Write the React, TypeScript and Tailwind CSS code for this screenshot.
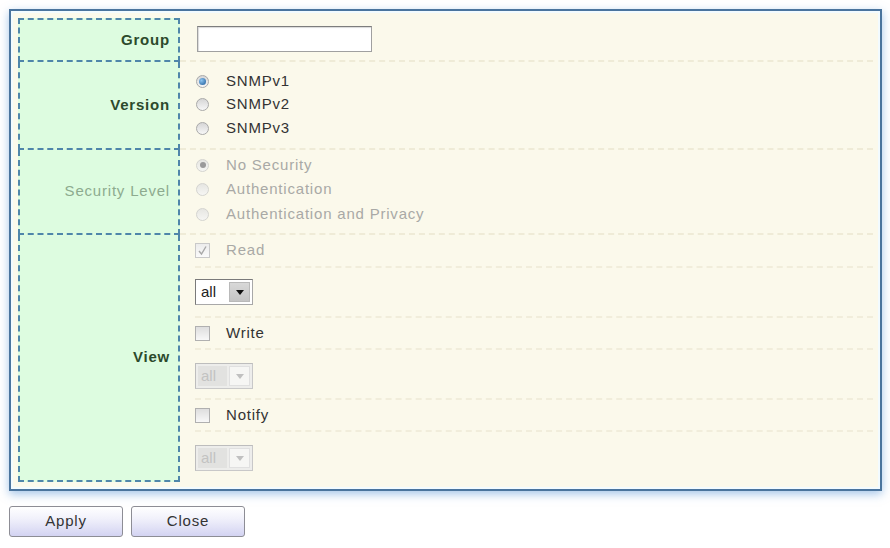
import React from "react";

const font = { fontFamily: '"Liberation Sans", Arial, sans-serif' };

function Radio({ checked, disabled }: { checked?: boolean; disabled?: boolean }) {
  return (
    <span
      className={
        "w-[13px] h-[13px] rounded-full border flex items-center justify-center shrink-0 " +
        (disabled
          ? "border-[#d4d4d0] bg-[linear-gradient(#e6e6e2,#f6f6f3)]"
          : "border-[#a9a9a9] bg-[linear-gradient(#d6d6d6,#f7f7f7)]")
      }
    >
      {checked && !disabled && (
        <span className="w-[7px] h-[7px] rounded-full bg-[radial-gradient(circle_at_35%_35%,#8cc4f0,#1d5a98)]" />
      )}
      {checked && disabled && (
        <span className="w-[6px] h-[6px] rounded-full bg-[#9a9a9a]" />
      )}
    </span>
  );
}

function Check({ checked, disabled }: { checked?: boolean; disabled?: boolean }) {
  return (
    <span
      className={
        "w-[15px] h-[15px] border flex items-center justify-center shrink-0 " +
        (disabled
          ? "border-[#c9c9c9] bg-[linear-gradient(#ececec,#fafafa)]"
          : "border-[#b0b0b0] bg-[linear-gradient(#dedede,#f8f8f8)]")
      }
    >
      {checked && (
        <svg width="11" height="11" viewBox="0 0 11 11">
          <path d="M2 6 L4.5 9 L9 1.5" stroke="#a8a8a8" strokeWidth="1.4" fill="none" />
        </svg>
      )}
    </span>
  );
}

function Select({ disabled }: { disabled?: boolean }) {
  return (
    <div
      className={
        "w-[58px] h-[26px] border flex items-stretch p-[2px] gap-[2px] " +
        (disabled
          ? "border-[#c8c8c8] border-t-[#bdbdbd] border-l-[#bdbdbd] bg-[#ededeb]"
          : "border-[#a8a8a8] border-t-[#7a7a7a] border-l-[#7a7a7a] bg-white")
      }
    >
      <div
        className={
          "flex-1 flex items-center pl-[3px] text-[15px] tracking-normal " +
          (disabled ? "text-[#c2c2c2] bg-[#e2e2e0]" : "text-[#222] bg-white")
        }
      >
        all
      </div>
      <div
        className={
          "w-[21px] flex items-center justify-center border " +
          (disabled
            ? "bg-[#f6f6f4] border-[#e0e0e0]"
            : "bg-[linear-gradient(#d8d8d8,#c4c4c4)] border-[#b9b9b9]")
        }
      >
        <svg width="8" height="5" viewBox="0 0 8 5">
          <path d="M0 0 H8 L4 5 Z" fill={disabled ? "#c0c0c0" : "#111"} />
        </svg>
      </div>
    </div>
  );
}

const labelBase =
  "w-[162px] shrink-0 bg-[#ddfce0] border-l-2 border-r-2 border-b-2 border-dashed border-[#4f86aa] flex items-center justify-end pr-[8px] text-[15px]";
const valueBase = "flex-1 border-b-2 border-dashed border-[#efebd7] pl-[16px]";
const faint = "border-b-2 border-dashed border-[#f1eddb]";

export default function App() {
  return (
    <div className="w-[890px] h-[548px] bg-white relative overflow-hidden tracking-[0.8px]" style={font}>
      <div className="ml-[9px] mt-[9px] w-[873px] border-2 border-[#4a749d] bg-[#fbf9eb] p-[7px] shadow-[0_3px_9px_rgba(90,150,215,0.55),inset_0_0_0_2px_#f2fbff]">
        {/* Group */}
        <div className="flex h-[44px]">
          <div className={labelBase + " border-t-2 font-bold text-[#2c4a2c]"}>Group</div>
          <div className={valueBase + " flex items-center"}>
            <div className="ml-px w-[175px] h-[26px] bg-white border border-[#a0a0a0] border-t-[#7d7d7d] shadow-[inset_1px_1px_1px_rgba(0,0,0,0.15)]" />
          </div>
        </div>
        {/* Version */}
        <div className="flex h-[88px]">
          <div className={labelBase + " font-bold text-[#2c4a2c]"}>Version</div>
          <div className={valueBase + " flex flex-col justify-center pb-[1px] text-[15px] text-[#333]"}>
            {["SNMPv1", "SNMPv2", "SNMPv3"].map((t, i) => (
              <div key={t} className="h-[23.5px] flex items-center">
                <Radio checked={i === 0} />
                <span className="ml-[17px]">{t}</span>
              </div>
            ))}
          </div>
        </div>
        {/* Security Level */}
        <div className="flex h-[85px]">
          <div className={labelBase + " text-[#8dab8f]"}>Security Level</div>
          <div className={valueBase + " flex flex-col justify-center pb-[4px] text-[15px] text-[#a9a9a6]"}>
            {["No Security", "Authentication", "Authentication and Privacy"].map((t, i) => (
              <div key={t} className="h-[24.5px] flex items-center">
                <Radio checked={i === 0} disabled />
                <span className="ml-[17px]">{t}</span>
              </div>
            ))}
          </div>
        </div>
        {/* View */}
        <div className="flex h-[247px]">
          <div className={labelBase + " font-bold text-[#2c4a2c]"}>View</div>
          <div className="flex-1 flex flex-col pl-[15px] text-[15px]">
            <div className={"h-[33px] flex items-center text-[#a9a9a6] " + faint}>
              <Check checked disabled />
              <span className="ml-[16px]">Read</span>
            </div>
            <div className={"h-[50px] pt-[11px] " + faint}>
              <Select />
            </div>
            <div className={"h-[32px] flex items-center text-[#333] " + faint}>
              <Check />
              <span className="ml-[16px]">Write</span>
            </div>
            <div className={"h-[50px] pt-[13px] " + faint}>
              <Select disabled />
            </div>
            <div className={"h-[32px] flex items-center text-[#333] " + faint}>
              <Check />
              <span className="ml-[16px]">Notify</span>
            </div>
            <div className="flex-1 pt-[13px]">
              <Select disabled />
            </div>
          </div>
        </div>
      </div>
      <div className="ml-[9px] mt-[15px] flex gap-[8px]">
        {["Apply", "Close"].map((t) => (
          <button
            key={t}
            className="w-[114px] h-[31px] rounded-[3px] border border-[#8d8d95] bg-[linear-gradient(#ffffff,#f1f1fb_40%,#d3d3f2)] text-[15px] text-[#333] flex items-center justify-center"
          >
            {t}
          </button>
        ))}
      </div>
    </div>
  );
}
